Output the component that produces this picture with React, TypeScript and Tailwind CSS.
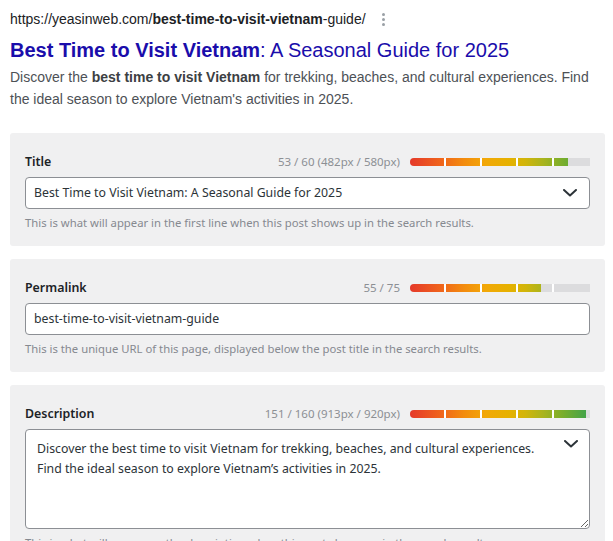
import React from "react";

const panelFont = { fontFamily: '"Noto Sans", "Open Sans", sans-serif' };

function Meter({ fill }: { fill: number }) {
  return (
    <div className="relative h-[8px] w-[180px] overflow-hidden rounded-l-full bg-[#dcdcde]">
      <div
        className="h-full bg-[linear-gradient(90deg,#e5392a_0%,#f0661b_18%,#f38c0e_30%,#f2a808_42%,#e6b100_55%,#d2b50a_64%,#a9b41e_74%,#74ad2e_86%,#3aa14e_100%)] bg-[length:180px_8px]"
        style={{ width: `${fill}px` }}
      />
      <div className="absolute top-0 left-[34px] h-full w-[2px] bg-white" />
      <div className="absolute top-0 left-[70px] h-full w-[2px] bg-white" />
      <div className="absolute top-0 left-[106px] h-full w-[2px] bg-white" />
      <div className="absolute top-0 left-[142px] h-full w-[2px] bg-white" />
    </div>
  );
}

function Chevron() {
  return (
    <svg width="14" height="8" viewBox="0 0 14 8" fill="none">
      <polyline points="1,1 7,6.5 13,1" stroke="#2c3338" strokeWidth="2" strokeLinecap="round" strokeLinejoin="round" />
    </svg>
  );
}

function LabelRow({ label, counter, fill }: { label: string; counter: string; fill: number }) {
  return (
    <div className="flex h-[18px] items-center justify-between">
      <span className="text-[12.4px] font-semibold text-[#1d2327]">{label}</span>
      <div className="flex items-center gap-[10px]">
        <span className="text-[11.5px] text-[#8c8f94]">{counter}</span>
        <Meter fill={fill} />
      </div>
    </div>
  );
}

export default function App() {
  return (
    <div className="min-h-screen bg-white pl-[10px] pr-[8px] pt-[9px]">
      <div style={{ fontFamily: '"Liberation Sans", Arial, sans-serif' }}>
        <div className="flex h-[20px] items-center text-[14px] text-[#202124]">
          <span>
            https://yeasinweb.com/<b>best-time-to-visit-vietnam</b>-guide/
          </span>
          <span className="ml-[16px] flex flex-col gap-[2px]">
            <span className="block h-[3px] w-[3px] rounded-full bg-[#9aa0a6]" />
            <span className="block h-[3px] w-[3px] rounded-full bg-[#9aa0a6]" />
            <span className="block h-[3px] w-[3px] rounded-full bg-[#9aa0a6]" />
          </span>
        </div>
        <div className="mt-[8px] text-[20px] leading-[26px] text-[#1a0dab]">
          <b>Best Time to Visit Vietnam</b>: A Seasonal Guide for 2025
        </div>
        <p className="mt-[3px] text-[14px] leading-[22px] text-[#4d5156]">
          Discover the <b className="text-[#3c4043]">best time to visit Vietnam</b> for trekking, beaches, and cultural
          experiences. Find
          <br />
          the ideal season to explore Vietnam's activities in 2025.
        </p>
      </div>

      <div className="mt-[23px] flex flex-col gap-[13px]" style={panelFont}>
        <div className="rounded-[3px] bg-[#f0f0f1] px-[15px] pt-[20px] pb-[15px]">
          <LabelRow label="Title" counter="53 / 60 (482px / 580px)" fill={158} />
          <div className="mt-[6px] flex h-[32px] items-center justify-between rounded-[4px] border border-[#8c8f94] bg-white pl-[8px] pr-[12px]">
            <span className="text-[12.3px] text-[#2c3338]">Best Time to Visit Vietnam: A Seasonal Guide for 2025</span>
            <Chevron />
          </div>
          <div className="mt-[6px] text-[11.3px] leading-[16px] text-[#868990]">
            This is what will appear in the first line when this post shows up in the search results.
          </div>
        </div>

        <div className="rounded-[3px] bg-[#f0f0f1] px-[15px] pt-[20px] pb-[15px]">
          <LabelRow label="Permalink" counter="55 / 75" fill={131} />
          <div className="mt-[6px] flex h-[32px] items-center rounded-[4px] border border-[#8c8f94] bg-white pl-[8px] pr-[12px]">
            <span className="text-[12.3px] text-[#2c3338]">best-time-to-visit-vietnam-guide</span>
          </div>
          <div className="mt-[6px] text-[11.3px] leading-[16px] text-[#868990]">
            This is the unique URL of this page, displayed below the post title in the search results.
          </div>
        </div>

        <div className="rounded-[3px] bg-[#f0f0f1] px-[15px] pt-[20px] pb-[15px]">
          <LabelRow label="Description" counter="151 / 160 (913px / 920px)" fill={176} />
          <div className="relative mt-[6px]">
            <textarea
              readOnly
              className="block h-[100px] w-full rounded-[4px] border border-[#8c8f94] bg-white py-[9px] pl-[11px] pr-[40px] text-[12.3px] leading-[20px] text-[#2c3338] outline-none"
              style={panelFont}
              defaultValue={
                "Discover the best time to visit Vietnam for trekking, beaches, and cultural experiences. Find the ideal season to explore Vietnam\u2019s activities in 2025."
              }
            />
            <div className="absolute top-[11px] right-[12px]">
              <Chevron />
            </div>
          </div>
          <div className="mt-[6px] text-[11.3px] leading-[16px] text-[#868990]">
            This is what will appear as the description when this post shows up in the search results.
          </div>
        </div>
      </div>
    </div>
  );
}
